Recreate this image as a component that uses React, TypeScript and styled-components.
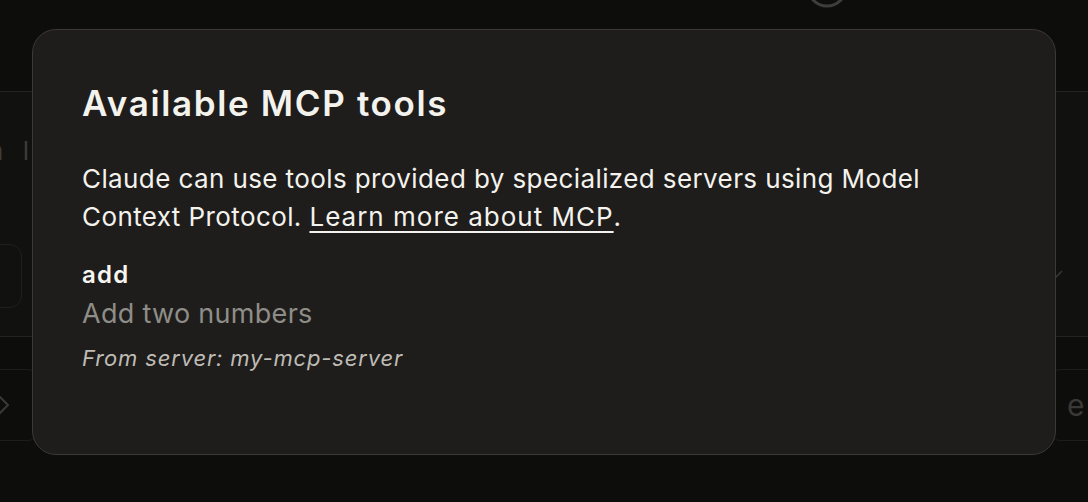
import React from "react";
import styled, { createGlobalStyle } from "styled-components";

const GlobalStyle = createGlobalStyle`
	html, body {
		margin: 0;
		padding: 0;
		background: #0d0d0c;
		font-family: Inter, "Noto Sans", sans-serif;
		overflow: hidden;
	}
`;

const Page = styled.div`
	position: relative;
	width: 1088px;
	height: 502px;
	overflow: hidden;
	background: #0d0d0c;
`;

const Header = styled.div`
	height: 91px;
	border-bottom: 1px solid #232321;
	position: relative;
`;

const HeaderRing = styled.svg`
	position: absolute;
	left: 803px;
	top: -37px;
`;

const Settings = styled.div`
	height: 245px;
	background: #111110;
	border-bottom: 1px solid #232321;
	display: flex;
	flex-direction: column;
	padding-top: 44px;
	box-sizing: border-box;
	color: #3d3c39;
`;

const FaintText = styled.div`
	font-size: 26px;
	line-height: 30px;
	margin-left: -12px;
	letter-spacing: 6px;
`;

const FaintRow = styled.div`
	margin-top: 78px;
	display: flex;
	justify-content: space-between;
	align-items: center;
`;

const FaintBox = styled.div`
	width: 50px;
	height: 62px;
	margin-left: -30px;
	border: 1px solid #1f1f1d;
	border-radius: 12px;
`;

const Footer = styled.div`
	padding: 32px 0 0;
	display: flex;
	justify-content: space-between;
`;

const FooterBox = styled.div<{ $side: "left" | "right" }>`
	width: 80px;
	height: 72px;
	border: 1px solid #1d1d1b;
	border-radius: 12px;
	margin-${(p) => p.$side}: -40px;
	display: flex;
	align-items: center;
	justify-content: ${(p) => (p.$side === "left" ? "flex-end" : "flex-start")};
	padding: 0 ${(p) => (p.$side === "left" ? "28px" : "18px")};
	box-sizing: border-box;
	color: #3a3937;
	font-size: 30px;
`;

const Dialog = styled.div`
	position: absolute;
	left: 32px;
	top: 29px;
	width: 1024px;
	height: 426px;
	box-sizing: border-box;
	background: #1e1d1c;
	border: 1px solid #3a3936;
	border-radius: 24px;
	padding: 51px 49px;
	color: #f4f2ec;
`;

const Title = styled.h2`
	margin: 0 0 35px;
	font-size: 35px;
	line-height: 44px;
	font-weight: 600;
	letter-spacing: 1.65px;
`;

const Description = styled.p`
	margin: 0 0 24px;
	font-size: 26px;
	line-height: 38px;
	font-weight: 400;
	letter-spacing: 0.4px;
	color: #f4f2ec;
`;

const Link = styled.a`
	color: inherit;
	letter-spacing: 1px;
	text-decoration: underline;
	text-underline-offset: 5px;
	text-decoration-thickness: 2px;
`;

const Tool = styled.div`
	display: flex;
	flex-direction: column;
`;

const ToolName = styled.div`
	font-size: 24px;
	line-height: 30px;
	font-weight: 600;
	letter-spacing: 1.2px;
	color: #f7f5ef;
`;

const ToolDesc = styled.div`
	margin-top: 6px;
	font-size: 27px;
	line-height: 36px;
	letter-spacing: 0.3px;
	color: #8f8d87;
`;

const ToolServer = styled.div`
	margin-top: 12px;
	font-size: 22px;
	line-height: 28px;
	font-style: italic;
	letter-spacing: 0.85px;
	color: #bebcb5;
`;

export default function App() {
	return (
		<Page>
			<GlobalStyle />
			<Header>
				<HeaderRing width="48" height="48" viewBox="0 0 48 48">
					<circle cx="24" cy="24" r="19" fill="none" stroke="#3d3d3b" strokeWidth="3" />
				</HeaderRing>
			</Header>
			<Settings>
				<FaintText>n l</FaintText>
				<FaintRow>
					<FaintBox />
					<svg width="20" height="20" viewBox="0 0 20 20" style={{ marginRight: 22 }}>
						<path d="M4 9 L8 13 L16 5" fill="none" stroke="#3a3937" strokeWidth="1.5" />
					</svg>
				</FaintRow>
			</Settings>
			<Footer>
				<FooterBox $side="left">
					<svg width="22" height="22" viewBox="0 0 22 22">
						<path d="M11 3 L19 11 L11 19 L3 11 Z" fill="none" stroke="#3a3937" strokeWidth="2" />
					</svg>
				</FooterBox>
				<FooterBox $side="right">e</FooterBox>
			</Footer>
			<Dialog>
				<Title>Available MCP tools</Title>
				<Description>
					Claude can use tools provided by specialized servers using Model
					<br />
					Context Protocol. <Link href="#">Learn more about MCP</Link>.
				</Description>
				<Tool>
					<ToolName>add</ToolName>
					<ToolDesc>Add two numbers</ToolDesc>
					<ToolServer>From server: my-mcp-server</ToolServer>
				</Tool>
			</Dialog>
		</Page>
	);
}
